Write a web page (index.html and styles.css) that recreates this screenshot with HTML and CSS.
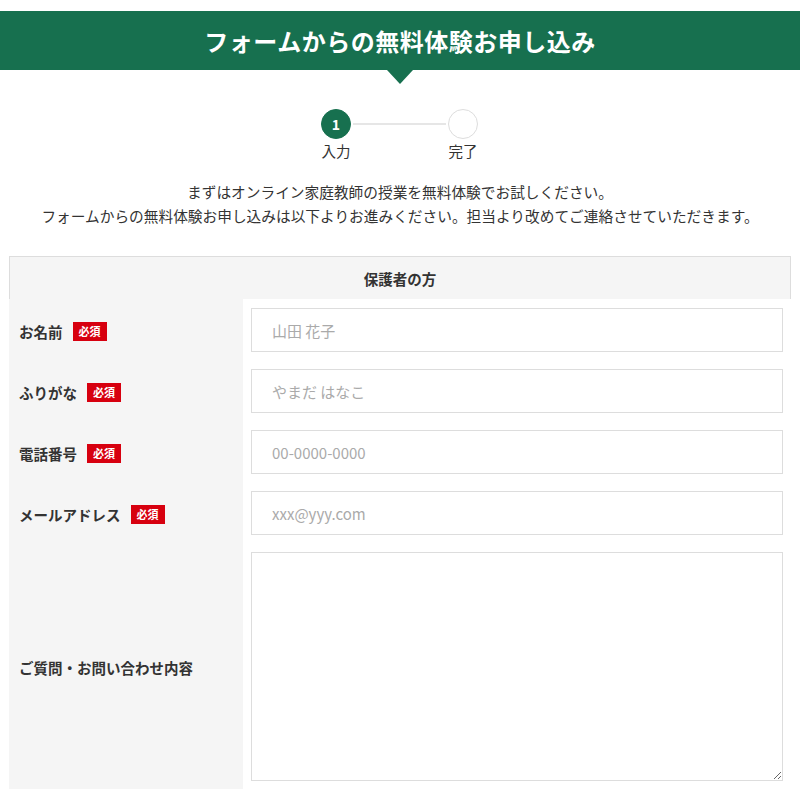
FILE: index.html
```html
<!DOCTYPE html>
<html>
<head>
    <title>無料体験お申し込み</title>
    <link rel="stylesheet" href="styles.css">
</head>
<body>
    <div class="page-title">
        <h1>フォームからの無料体験お申し込み</h1>
    </div>
    <div class="steps">
        <div class="step">
            <span class="step-num active">1</span>
            <span class="step-label">入力</span>
        </div>
        <div class="step-line"></div>
        <div class="step">
            <span class="step-num"></span>
            <span class="step-label">完了</span>
        </div>
    </div>
    <p class="lead">まずはオンライン家庭教師の授業を無料体験でお試しください。<br>フォームからの無料体験お申し込みは以下よりお進みください。担当より改めてご連絡させていただきます。</p>
    <div class="form-table">
        <div class="form-head">保護者の方</div>
        <div class="form-row">
            <div class="form-label">お名前<span class="req">必須</span></div>
            <div class="form-field"><input type="text" placeholder="山田 花子"></div>
        </div>
        <div class="form-row">
            <div class="form-label">ふりがな<span class="req">必須</span></div>
            <div class="form-field"><input type="text" placeholder="やまだ はなこ"></div>
        </div>
        <div class="form-row">
            <div class="form-label">電話番号<span class="req">必須</span></div>
            <div class="form-field"><input type="tel" placeholder="00-0000-0000"></div>
        </div>
        <div class="form-row">
            <div class="form-label">メールアドレス<span class="req">必須</span></div>
            <div class="form-field"><input type="email" placeholder="xxx@yyy.com"></div>
        </div>
        <div class="form-row">
            <div class="form-label">ご質問・お問い合わせ内容</div>
            <div class="form-field"><textarea></textarea></div>
        </div>
    </div>
</body>
</html>
```

FILE: styles.css
```css
body {
    font-family: "Noto Sans CJK JP", "Noto Sans", sans-serif;
    color: #333;
    background-color: #fff;
    margin: 0;
    padding: 0;
}
.page-title {
    position: relative;
    margin-top: 11px;
    height: 59px;
    background-color: #17704f;
    display: flex;
    align-items: center;
    justify-content: center;
}
.page-title::after {
    content: "";
    position: absolute;
    left: 50%;
    top: 100%;
    margin-left: -13px;
    border-left: 13px solid transparent;
    border-right: 13px solid transparent;
    border-top: 14px solid #17704f;
}
.page-title h1 {
    margin: 0;
    color: #fff;
    font-size: 24px;
    font-weight: bold;
    letter-spacing: 0.5px;
}
.steps {
    display: flex;
    justify-content: center;
    margin-top: 39px;
    padding-right: 1px;
}
.step {
    width: 30px;
    display: flex;
    flex-direction: column;
    align-items: center;
}
.step-num {
    width: 30px;
    height: 30px;
    box-sizing: border-box;
    border-radius: 50%;
    border: 1px solid #ddd;
    background-color: #fff;
    color: #fff;
    font-size: 14px;
    font-weight: bold;
    display: flex;
    align-items: center;
    justify-content: center;
}
.step-num.active {
    background-color: #17704f;
    border-color: #17704f;
}
.step-label {
    margin-top: 2px;
    font-size: 14.5px;
    line-height: 20px;
    white-space: nowrap;
}
.step-line {
    width: 93px;
    height: 2px;
    margin: 14px 2px 0;
    background-color: #e6e6e6;
}
.lead {
    margin: 19px 0 0;
    text-align: center;
    font-size: 14.7px;
    line-height: 24px;
}
.form-table {
    margin: 28px 9px 0;
}
.form-head {
    height: 42px;
    border: 1px solid #ddd;
    border-bottom: none;
    background-color: #f5f5f5;
    font-size: 14.5px;
    font-weight: bold;
    display: flex;
    align-items: center;
    justify-content: center;
}
.form-row {
    display: grid;
    grid-template-columns: 234px 1fr;
}
.form-label {
    background-color: #f5f5f5;
    padding: 3px 10px 0;
    font-size: 14.5px;
    font-weight: bold;
    display: flex;
    align-items: center;
}
.req {
    display: inline-block;
    margin-left: 10px;
    padding: 0 6px;
    height: 19px;
    line-height: 19px;
    background-color: #d7000f;
    color: #fff;
    font-size: 11px;
    font-weight: bold;
}
.form-field {
    padding: 9px 8px 8px;
}
.form-field input,
.form-field textarea {
    display: block;
    width: 100%;
    box-sizing: border-box;
    border: 1px solid #ddd;
    margin: 0;
    font-family: inherit;
    font-size: 15px;
    color: #333;
    background-color: #fff;
}
.form-field input {
    height: 44px;
    padding: 0 20px;
}
.form-field textarea {
    height: 229px;
    padding: 10px 20px;
}
::placeholder {
    color: #aaa;
}
```
